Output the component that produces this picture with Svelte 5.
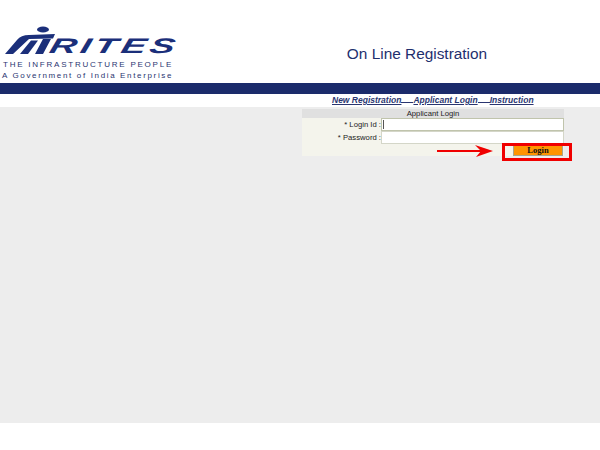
<script>
  const links = ["New Registration", "Applicant Login", "Instruction"];
</script>

<div class="page">
  <header class="top">
    <div class="logo">
      <div class="mark">
        <svg width="54" height="32" viewBox="0 0 54 32" aria-hidden="true">
          <ellipse cx="41" cy="3.5" rx="6" ry="3" fill="#1b2f7a" />
          <path d="M3 28 L15 14 Q19 9 27 9 L53 8 L51 12.5 L27 13 L11 28 Z" fill="#1b2f7a" />
          <path d="M18 28 L29 14.5 L36 14.5 L26 28 Z" fill="#1b2f7a" />
          <path d="M33 28 L41 13 L49 13 L41 28 Z" fill="#1b2f7a" />
        </svg>
        <span class="word">RITES</span>
      </div>
      <div class="tag1">THE INFRASTRUCTURE PEOPLE</div>
      <div class="tag2">A Government of India Enterprise</div>
    </div>
    <h1>On Line Registration</h1>
  </header>
  <div class="band"></div>
  <nav class="nav">
    {#each links as l, i}
      <a href="#top">{l}</a>{#if i < 2}<a href="#top" class="gap"></a>{/if}
    {/each}
  </nav>
  <main class="body">
    <div class="wrap">
      <form class="panel">
        <div class="ptitle">Applicant Login</div>
        <div class="row">
          <label for="lid">* Login Id :</label>
          <input id="lid" class="first" />
          <span class="caret"></span>
        </div>
        <div class="row"><label for="pw">* Password :</label><input id="pw" type="password" /></div>
        <div class="actions">
          <svg class="arrow" width="56" height="13" viewBox="0 0 56 13" aria-hidden="true">
            <path d="M0 5 H44 V7 H0 Z" fill="#f00000" />
            <path d="M38 0 L56 6 L39 12 L44 6 Z" fill="#f00000" />
          </svg>
          <div class="hl"><button type="button">Login</button></div>
        </div>
      </form>
    </div>
  </main>
</div>

<style>
  :global(body) {
    margin: 0;
    background: #fff;
  }
  .page {
    width: 600px;
    height: 450px;
    overflow: hidden;
    font-family: "Liberation Sans", Arial, sans-serif;
  }
  .top {
    height: 83px;
    display: flex;
  }
  .logo {
    width: 234px;
    padding: 26px 0 0 2px;
    box-sizing: border-box;
    color: #2a3570;
  }
  .mark {
    height: 32px;
    display: flex;
  }
  .word {
    font: italic bold 21px/16px "Liberation Sans", sans-serif;
    color: #1b2f7a;
    margin: 12px 0 0 -9px;
    letter-spacing: 2.1px;
    transform: scaleX(1.78) skewX(-8deg);
    transform-origin: left bottom;
  }
  .tag1 {
    font-size: 8px;
    line-height: 10px;
    letter-spacing: 1.77px;
    margin: 2px 0 0 1px;
    white-space: nowrap;
  }
  .tag2 {
    font-size: 8px;
    line-height: 11px;
    letter-spacing: 1.65px;
    white-space: nowrap;
  }
  h1 {
    margin: 0;
    flex: 1;
    padding-top: 45px;
    text-align: center;
    font-size: 15.4px;
    line-height: 18px;
    font-weight: normal;
    color: #1f2f6e;
  }
  .band {
    height: 11px;
    background: #1b2b6b;
  }
  .nav {
    height: 13px;
    padding-left: 332px;
    font: italic bold 8.5px/13px "Liberation Sans", sans-serif;
    white-space: nowrap;
  }
  .nav a {
    color: #2a3570;
  }
  .nav .gap {
    display: inline-block;
    width: 12px;
    height: 8px;
    border-bottom: 1px solid #2a3570;
    vertical-align: baseline;
  }
  .body {
    height: 316px;
    background: #ededed;
  }
  .wrap {
    padding: 2px 36px 0 302px;
  }
  .panel {
    background: #f4f4ec;
    height: 47px;
    font-size: 7.7px;
    color: #222;
  }
  .ptitle {
    height: 9px;
    line-height: 9px;
    background: #e0e0e0;
    text-align: center;
  }
  .row {
    height: 13px;
    display: flex;
    align-items: center;
    position: relative;
  }
  .row label {
    width: 79px;
    text-align: right;
  }
  input {
    width: 183px;
    height: 13px;
    box-sizing: border-box;
    margin: 0;
    padding: 0;
    border: 1px solid #d4d6c8;
    background: #fff;
    outline: none;
  }
  input.first {
    border-color: #c0c4ac;
  }
  .caret {
    position: absolute;
    left: 81px;
    top: 2px;
    width: 1px;
    height: 9px;
    background: #555;
  }
  .actions {
    display: flex;
    justify-content: flex-end;
    align-items: flex-start;
    position: relative;
    height: 12px;
    padding: 1px 1px 0 0;
  }
  .actions button {
    display: block;
    width: 50px;
    height: 11px;
    padding: 0;
    background: #ff9400;
    border: 1px solid #a8a48c;
    border-width: 0 1px 1px 1px;
    font: bold 8.5px/10px "Liberation Serif", serif;
    color: #111;
  }
  /* the annotations sit over the form */
  .hl {
    position: relative;
  }
  .hl::after {
    content: "";
    position: absolute;
    left: -11px;
    top: -2px;
    width: 64px;
    height: 12px;
    border: 3px solid #f00000;
  }
  .arrow {
    position: absolute;
    left: 135px;
    top: 1px;
  }
</style>
